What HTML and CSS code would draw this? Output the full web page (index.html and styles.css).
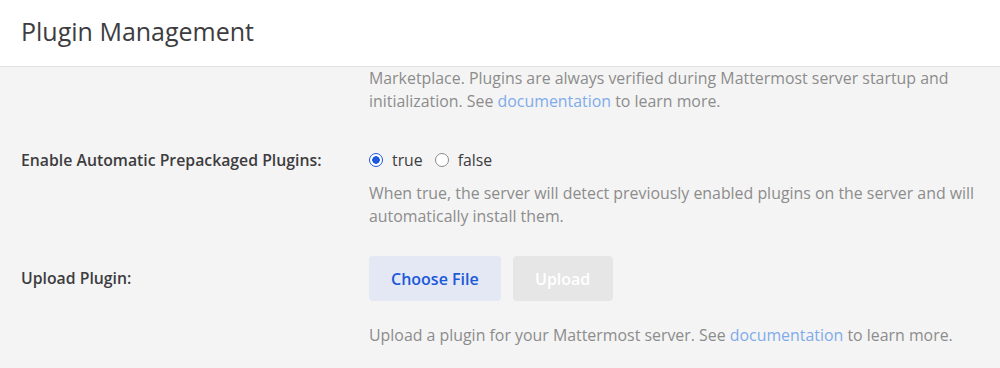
FILE: index.html
```html
<!DOCTYPE html>
<html lang="en">
  <head>
    <title>Plugin Management</title>
    <meta charset="UTF-8" />
    <meta name="viewport" content="width=device-width" />
    <link rel="stylesheet" href="styles.css">
  </head>
  <body>
    <header class="page-header">
      <h1>Plugin Management</h1>
    </header>
    <main class="settings">
      <div class="form-group">
        <div></div>
        <div class="help-text help-text--top">
          Marketplace. Plugins are always verified during Mattermost server startup and
          initialization. See <a href="#">documentation</a> to learn more.
        </div>
      </div>

      <div class="form-group form-group--tight">
        <label class="control-label control-label--radio">Enable Automatic Prepackaged Plugins:</label>
        <div>
          <div class="radio-row">
            <label class="radio">
              <input type="radio" name="prepackaged" checked />
              true
            </label>
            <label class="radio">
              <input type="radio" name="prepackaged" />
              false
            </label>
          </div>
          <div class="help-text">
            When true, the server will detect previously enabled plugins on the server and will
            automatically install them.
          </div>
        </div>
      </div>

      <div class="form-group">
        <label class="control-label control-label--button">Upload Plugin:</label>
        <div>
          <div class="button-row">
            <button class="btn btn-tertiary">Choose File</button>
            <button class="btn btn-disabled" disabled>Upload</button>
          </div>
          <div class="help-text help-text--spaced">
            Upload a plugin for your Mattermost server. See <a href="#">documentation</a> to learn more.
          </div>
        </div>
      </div>
    </main>
  </body>
</html>
```

FILE: styles.css
```css
* {
  box-sizing: border-box;
}

body {
  margin: 0;
  font-family: "Open Sans", sans-serif;
  color: #3d3c40;
  background-color: #f4f4f4;
}

.page-header {
  height: 67px;
  padding: 0 21px;
  display: flex;
  align-items: center;
  background-color: white;
  border-bottom: solid 1px #e2e2e2;
}

.page-header h1 {
  margin: 0 0 5px;
  font-size: 25px;
  font-weight: 400;
}

.settings {
  padding: 0 20px 0 21px;
}

.form-group {
  display: grid;
  grid-template-columns: 348px 1fr;
  margin-bottom: 30px;
}

.form-group--tight {
  margin-bottom: 28px;
}

.control-label {
  font-size: 15.8px;
  font-weight: 600;
  line-height: 20px;
}

.control-label--radio {
  padding-top: 7px;
}

.control-label--button {
  padding-top: 12px;
}

.radio-row {
  height: 34px;
  display: flex;
  align-items: center;
  gap: 12px;
}

.radio {
  display: flex;
  align-items: center;
  gap: 9px;
  font-size: 15.8px;
}

.radio input {
  appearance: none;
  margin: 0;
  width: 14px;
  height: 14px;
  border-radius: 50%;
  border: solid 1px #8a8a8d;
  background-color: white;
}

.radio input:checked {
  border: solid 1.5px #1c58d9;
  background: radial-gradient(circle, #1c58d9 0 3.5px, white 4px);
}

.help-text {
  margin-top: 5px;
  font-size: 15.9px;
  line-height: 23px;
  color: #8c8c8c;
}

.help-text--top {
  margin-top: 0;
}

.help-text--spaced {
  margin-top: 23px;
}

.help-text a {
  color: #80abea;
  text-decoration: none;
}

.button-row {
  display: flex;
  gap: 12px;
}

.btn {
  height: 45px;
  padding: 0 22px;
  border: none;
  border-radius: 4px;
  font-family: "Open Sans", sans-serif;
  font-size: 16px;
  font-weight: 600;
}

.btn-tertiary {
  color: #1c58d9;
  background-color: #e3e8f4;
}

.btn-disabled {
  width: 100px;
  color: white;
  background-color: #e6e6e6;
}
```
